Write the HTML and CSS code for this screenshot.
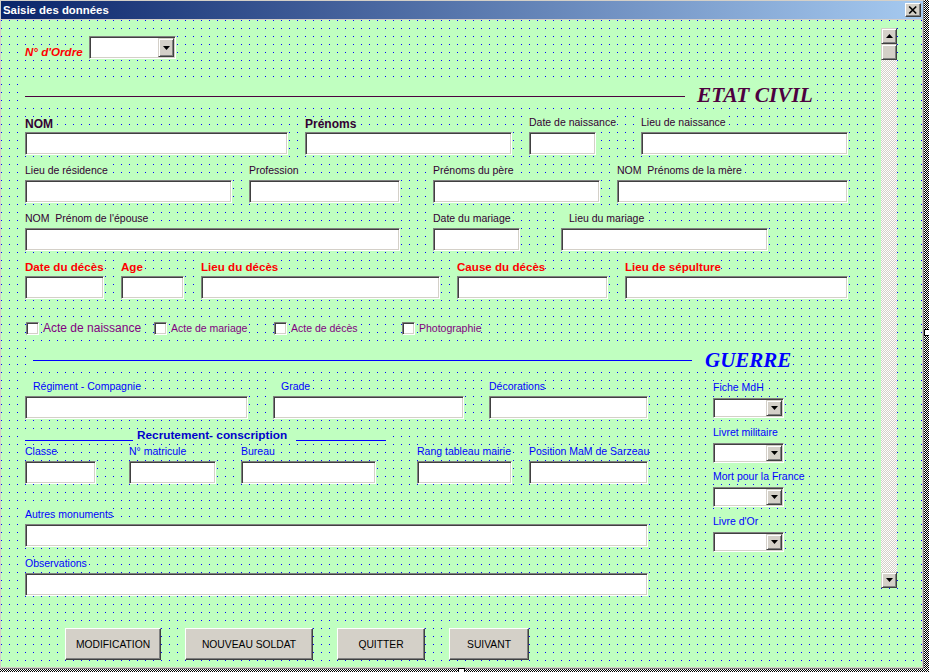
FILE: index.html
```html
<!DOCTYPE html>
<html lang="fr">
<head>
<meta charset="utf-8">
<title>Saisie des données</title>
<link rel="stylesheet" href="styles.css">
</head>
<body>
<div class="window">
  <div class="titlebar">
    <span class="title">Saisie des données</span>
    <span class="close"><svg width="12" height="10" viewBox="0 0 12 10"><path d="M2.2 1.5 L9.2 8.5 M9.2 1.5 L2.2 8.5" stroke="#000" stroke-width="1.7" fill="none"/></svg></span>
  </div>
  <div class="client">
    <div class="content">
      <div class="ordre">
        <span class="lbl-ordre">N° d'Ordre</span>
        <div class="combo c-ordre"><div class="dd"><svg width="7" height="4" viewBox="0 0 7 4"><polygon points="0,0 7,0 3.5,4" fill="#000"/></svg></div></div>
      </div>

      <div class="section-head civil">
        <div class="rule rule-civil"></div>
        <div class="sec-title t-civil">ETAT CIVIL</div>
      </div>

      <div class="row r-gap">
        <div class="field w263"><span class="lbl big">NOM</span><div class="tb"></div></div>
        <div class="field w207 ml17"><span class="lbl big">Prénoms</span><div class="tb"></div></div>
        <div class="field w67 ml17"><span class="lbl">Date de naissance</span><div class="tb"></div></div>
        <div class="field w207 ml45"><span class="lbl">Lieu de naissance</span><div class="tb"></div></div>
      </div>

      <div class="row r-gap">
        <div class="field w207"><span class="lbl">Lieu de résidence</span><div class="tb"></div></div>
        <div class="field w151 ml17"><span class="lbl">Profession</span><div class="tb"></div></div>
        <div class="field w167 ml33"><span class="lbl">Prénoms du père</span><div class="tb"></div></div>
        <div class="field w231 ml17"><span class="lbl">NOM&nbsp; Prénoms de la mère</span><div class="tb"></div></div>
      </div>

      <div class="row r-gap">
        <div class="field w375"><span class="lbl">NOM&nbsp; Prénom de l'épouse</span><div class="tb"></div></div>
        <div class="field w87 ml33"><span class="lbl">Date du mariage</span><div class="tb"></div></div>
        <div class="field w207 ml41"><span class="lbl pl8">Lieu du mariage</span><div class="tb"></div></div>
      </div>

      <div class="row r-gap">
        <div class="field w79"><span class="lbl red">Date du décès</span><div class="tb"></div></div>
        <div class="field w63 ml17"><span class="lbl red">Age</span><div class="tb"></div></div>
        <div class="field w239 ml17"><span class="lbl red">Lieu du décès</span><div class="tb"></div></div>
        <div class="field w151 ml17"><span class="lbl red">Cause du décès</span><div class="tb"></div></div>
        <div class="field w223 ml17"><span class="lbl red">Lieu de sépulture</span><div class="tb"></div></div>
      </div>

      <div class="checks">
        <div class="chk w128"><span class="cb"></span><span class="chk-lbl large">Acte de naissance</span></div>
        <div class="chk w120"><span class="cb"></span><span class="chk-lbl">Acte de mariage</span></div>
        <div class="chk w128"><span class="cb"></span><span class="chk-lbl">Acte de décès</span></div>
        <div class="chk"><span class="cb"></span><span class="chk-lbl">Photographie</span></div>
      </div>

      <div class="section-head guerre">
        <div class="rule rule-guerre"></div>
        <div class="sec-title t-guerre">GUERRE</div>
      </div>

      <div class="gbody">
        <div class="gleft">
          <div class="row">
            <div class="field w223"><span class="lbl blue pl8">Régiment - Compagnie</span><div class="tb"></div></div>
            <div class="field w191 ml25"><span class="lbl blue pl8">Grade</span><div class="tb"></div></div>
            <div class="field w159 ml25"><span class="lbl blue">Décorations</span><div class="tb"></div></div>
          </div>

          <div class="recru">
            <div class="recru-line w108"></div>
            <span class="recru-txt">Recrutement- conscription</span>
            <div class="recru-line w90 ml9"></div>
          </div>

          <div class="row g2">
            <div class="field w71"><span class="lbl blue">Classe</span><div class="tb"></div></div>
            <div class="field w87 ml33"><span class="lbl blue">N° matricule</span><div class="tb"></div></div>
            <div class="field w135 ml25"><span class="lbl blue">Bureau</span><div class="tb"></div></div>
            <div class="field w95 ml41"><span class="lbl blue">Rang tableau mairie</span><div class="tb"></div></div>
            <div class="field w119 ml17"><span class="lbl blue">Position MaM de Sarzeau</span><div class="tb"></div></div>
          </div>

          <div class="row autres">
            <div class="field w623"><span class="lbl blue">Autres monuments</span><div class="tb"></div></div>
          </div>

          <div class="row obs">
            <div class="field w623"><span class="lbl blue">Observations</span><div class="tb"></div></div>
          </div>
        </div>

        <div class="gright">
          <div class="ritem">
            <span class="lbl blue rl">Fiche MdH</span>
            <div class="combo c-small"><div class="dd"><svg width="7" height="4" viewBox="0 0 7 4"><polygon points="0,0 7,0 3.5,4" fill="#000"/></svg></div></div>
          </div>
          <div class="ritem mt8">
            <span class="lbl blue rl">Livret militaire</span>
            <div class="combo c-small"><div class="dd"><svg width="7" height="4" viewBox="0 0 7 4"><polygon points="0,0 7,0 3.5,4" fill="#000"/></svg></div></div>
          </div>
          <div class="ritem mt7">
            <span class="lbl blue rl">Mort pour la France</span>
            <div class="combo c-small"><div class="dd"><svg width="7" height="4" viewBox="0 0 7 4"><polygon points="0,0 7,0 3.5,4" fill="#000"/></svg></div></div>
          </div>
          <div class="ritem mt8">
            <span class="lbl blue rl">Livre d'Or</span>
            <div class="combo c-small"><div class="dd"><svg width="7" height="4" viewBox="0 0 7 4"><polygon points="0,0 7,0 3.5,4" fill="#000"/></svg></div></div>
          </div>
        </div>
      </div>

      <div class="cmds">
        <div class="cmd w96">MODIFICATION</div>
        <div class="cmd w128">NOUVEAU SOLDAT</div>
        <div class="cmd w88">QUITTER</div>
        <div class="cmd w80">SUIVANT</div>
      </div>
    </div>

    <div class="vscroll">
      <div class="sbtn"><svg width="7" height="4" viewBox="0 0 7 4"><polygon points="0,4 7,4 3.5,0" fill="#000"/></svg></div>
      <div class="thumb"></div>
      <div class="track"></div>
      <div class="sbtn"><svg width="7" height="4" viewBox="0 0 7 4"><polygon points="0,0 7,0 3.5,4" fill="#000"/></svg></div>
    </div>
  </div>
</div>
<div class="handle h-right"></div>
<div class="handle h-bottom"></div>
</body>
</html>
```

FILE: styles.css
```css
* { box-sizing: border-box; }

html, body { margin: 0; padding: 0; }

body {
  width: 929px;
  height: 672px;
  overflow: hidden;
  position: relative;
  background: repeating-conic-gradient(#000 0 25%, #fff 0 50%) 0 0 / 2px 2px;
  font-family: "Liberation Sans", Arial, sans-serif;
}

.window {
  width: 924px;
  border: 1px solid #d4d0c8;
  border-right-color: #808080;
  border-bottom-color: #808080;
  background: #d4d0c8;
}

.titlebar {
  height: 19px;
  border-bottom: 1px solid #d4d0c8;
  background: linear-gradient(to right, #0a246a, #a6caf0);
  display: flex;
  justify-content: space-between;
  align-items: flex-start;
}

.title {
  color: #fff;
  font-weight: bold;
  font-size: 11.4px;
  line-height: 18px;
  padding-left: 2px;
  white-space: nowrap;
}

.close {
  width: 16px;
  height: 14px;
  margin-top: 2px;
  margin-right: 2px;
  background: #d4d0c8;
  border: 1px solid;
  border-color: #fff #404040 #404040 #fff;
  box-shadow: inset -1px -1px #808080;
  display: flex;
  align-items: center;
  justify-content: center;
}

.close svg { display: block; }

.client {
  height: 648px;
  display: flex;
  border-right: 1px solid #d4d0c8;
  border-bottom: 1px solid #d4d0c8;
  background-color: #0000ff;
  background-image:
    linear-gradient(to right, transparent 1px, #c0ffc0 1px),
    linear-gradient(to bottom, transparent 1px, #c0ffc0 1px);
  background-size: 8px 8px;
}

.content {
  width: 880px;
  flex: none;
  padding-left: 24px;
}

/* ---------- N° d'ordre ---------- */
.ordre {
  margin-top: 16px;
  display: flex;
  align-items: flex-start;
  height: 23px;
}

.lbl-ordre {
  width: 64px;
  margin-top: 9px;
  font-size: 11.6px;
  line-height: 13px;
  font-weight: bold;
  font-style: italic;
  color: #ff0000;
  background: #c0ffc0;
  white-space: nowrap;
}

/* ---------- combos ---------- */
.combo {
  display: flex;
  justify-content: flex-end;
  background: #fff;
  border: 1px solid;
  border-color: #808080 #fff #fff #808080;
  box-shadow: inset 1px 1px #404040, inset -1px -1px #d4d0c8;
  padding: 1px;
}

.c-ordre { width: 87px; height: 23px; }
.c-small { width: 71px; height: 20px; }

.dd {
  width: 16px;
  height: 100%;
  background: #d4d0c8;
  border: 1px solid;
  border-color: #d4d0c8 #404040 #404040 #d4d0c8;
  box-shadow: inset 1px 1px #fff, inset -1px -1px #808080;
  display: flex;
  align-items: center;
  justify-content: center;
}

.dd svg, .sbtn svg { display: block; }

/* ---------- section headers ---------- */
.section-head {
  display: flex;
  align-items: flex-start;
  width: fit-content;
  height: 24px;
  background: #c0ffc0;
}

.civil { margin-top: 24px; }
.guerre { margin-top: 13px; margin-left: 8px; }

.rule { height: 1px; }

.rule-civil {
  width: 660px;
  margin-top: 13px;
  background: #4d0040;
}

.rule-guerre {
  width: 659px;
  margin-top: 12px;
  background: #0000ff;
}

.sec-title {
  font-family: "Liberation Serif", "Times New Roman", serif;
  font-weight: bold;
  font-style: italic;
  line-height: 24px;
  white-space: nowrap;
}

.t-civil {
  font-size: 21.4px;
  margin-left: 12px;
  color: #4d0040;
}

.t-guerre {
  font-size: 21px;
  margin-left: 13px;
  color: #0000ff;
}

/* ---------- fields ---------- */
.row {
  display: flex;
  align-items: flex-start;
}

.r-gap { margin-top: 9px; }

.field {
  display: flex;
  flex-direction: column;
  align-items: flex-start;
  flex: none;
}

.lbl {
  display: inline-block;
  height: 13px;
  margin-bottom: 3px;
  font-size: 10.5px;
  line-height: 13px;
  color: #330033;
  background: #c0ffc0;
  white-space: nowrap;
}

.lbl.big {
  font-size: 12px;
  font-weight: bold;
  margin-top: 2px;
  margin-bottom: 1px;
}

.lbl.red {
  color: #ff0000;
  font-weight: bold;
  font-size: 11.6px;
}

.lbl.blue { color: #0000ff; }

.pl8 { padding-left: 8px; }

.tb {
  align-self: stretch;
  height: 23px;
  background: #fff;
  border: 1px solid;
  border-color: #808080 #fff #fff #808080;
  box-shadow: inset 1px 1px #404040, inset -1px -1px #d4d0c8;
}

.w63 { width: 63px; }
.w67 { width: 67px; }
.w71 { width: 71px; }
.w79 { width: 79px; }
.w80 { width: 80px; }
.w87 { width: 87px; }
.w88 { width: 88px; }
.w90 { width: 90px; }
.w95 { width: 95px; }
.w96 { width: 96px; }
.w108 { width: 108px; }
.w119 { width: 119px; }
.w120 { width: 120px; }
.w128 { width: 128px; }
.w135 { width: 135px; }
.w151 { width: 151px; }
.w159 { width: 159px; }
.w167 { width: 167px; }
.w191 { width: 191px; }
.w207 { width: 207px; }
.w223 { width: 223px; }
.w231 { width: 231px; }
.w239 { width: 239px; }
.w263 { width: 263px; }
.w375 { width: 375px; }
.w623 { width: 623px; }

.ml9 { margin-left: 9px; }
.ml17 { margin-left: 17px; }
.ml25 { margin-left: 25px; }
.ml33 { margin-left: 33px; }
.ml41 { margin-left: 41px; }
.ml45 { margin-left: 45px; }

/* ---------- check boxes ---------- */
.checks {
  display: flex;
  align-items: flex-start;
  margin-top: 23px;
  padding-left: 1px;
  height: 13px;
}

.chk {
  display: flex;
  align-items: flex-start;
  flex: none;
}

.cb {
  width: 13px;
  height: 13px;
  flex: none;
  background: #fff;
  border: 1px solid;
  border-color: #808080 #fff #fff #808080;
  box-shadow: inset 1px 1px #404040, inset -1px -1px #d4d0c8;
}

.chk-lbl {
  margin-left: 4px;
  font-size: 10.5px;
  line-height: 13px;
  color: #800080;
  background: #c0ffc0;
  white-space: nowrap;
}

.chk-lbl.large { font-size: 12px; }

/* ---------- guerre ---------- */
.gbody {
  display: flex;
  align-items: flex-start;
  margin-top: 8px;
}

.gleft { width: 623px; flex: none; }

.recru {
  display: flex;
  align-items: flex-start;
  width: fit-content;
  height: 13px;
  margin-top: 10px;
  background: #c0ffc0;
}

.recru-line {
  height: 1px;
  margin-top: 11px;
  background: #0000ff;
}

.recru-txt {
  margin-left: 4px;
  font-size: 11.8px;
  line-height: 13px;
  font-weight: bold;
  color: #0000cc;
  white-space: nowrap;
}

.g2 { margin-top: 3px; }
.autres { margin-top: 24px; }
.obs { margin-top: 10px; }

.gright {
  margin-left: 65px;
  margin-top: 1px;
  display: flex;
  flex-direction: column;
}

.ritem {
  display: flex;
  flex-direction: column;
  align-items: flex-start;
}

.lbl.rl { margin-bottom: 4px; }
.mt8 { margin-top: 8px; }
.mt7 { margin-top: 7px; }

/* ---------- command buttons ---------- */
.cmds {
  display: flex;
  gap: 24px;
  margin-top: 32px;
  margin-left: 40px;
}

.cmd {
  height: 32px;
  flex: none;
  display: flex;
  align-items: center;
  justify-content: center;
  background: #d4d0c8;
  border: 1px solid;
  border-color: #fff #404040 #404040 #fff;
  box-shadow: inset -1px -1px #808080;
  font-size: 10.3px;
  color: #000;
  white-space: nowrap;
}

/* ---------- scrollbar ---------- */
.vscroll {
  width: 16px;
  height: 560px;
  margin-top: 8px;
  flex: none;
  display: flex;
  flex-direction: column;
}

.sbtn, .thumb {
  width: 16px;
  height: 16px;
  flex: none;
  background: #d4d0c8;
  border: 1px solid;
  border-color: #d4d0c8 #404040 #404040 #d4d0c8;
  box-shadow: inset 1px 1px #fff, inset -1px -1px #808080;
}

.sbtn {
  display: flex;
  align-items: center;
  justify-content: center;
}

.track {
  flex: 1;
  background: repeating-conic-gradient(#fff 0 25%, #d4d0c8 0 50%) 0 0 / 2px 2px;
}

/* ---------- designer handles ---------- */
.handle {
  position: absolute;
  width: 7px;
  height: 7px;
  background: #fff;
  border: 1px solid #000;
}

.h-right { left: 924px; top: 329px; }
.h-bottom { left: 458px; top: 668px; }
```
